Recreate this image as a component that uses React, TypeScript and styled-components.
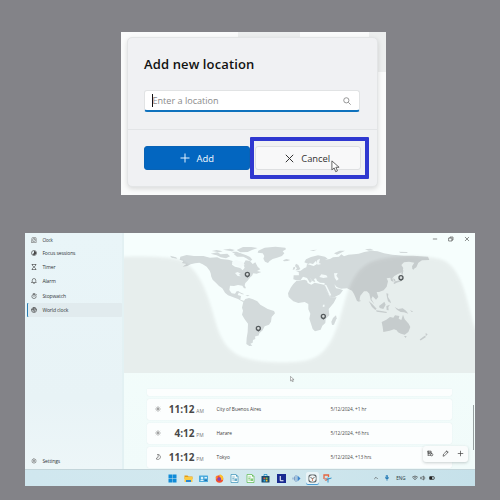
import React from "react";
import styled, { createGlobalStyle } from "styled-components";

const Global = createGlobalStyle`
  * { box-sizing: border-box; }
  body { margin: 0; background: #838388; overflow: hidden; }
`;

const Page = styled.main`
  width: 500px;
  height: 500px;
  padding: 32px 25px 14px;
  display: flex;
  flex-direction: column;
  justify-content: space-between;
  background: #838388;
  font-family: "Open Sans", "Noto Sans", sans-serif;
  color: #222;
`;

/* ---------- dialog ---------- */

const Backdrop = styled.section`
  width: 265px;
  height: 163px;
  margin-left: 96px;
  padding: 5px 8px 8px 6px;
  overflow: hidden;
  background:
    linear-gradient(#eceeee, #eceeee) 117px 0 / 62px 5px no-repeat,
    linear-gradient(#eceeee, #eceeee) 248px 0 / 17px 40px no-repeat,
    #fafbfb;
`;

const Dialog = styled.div`
  height: 150px;
  display: flex;
  flex-direction: column;
  border: 1px solid #e3e5e6;
  border-radius: 5px;
  background: #f0f1f3;
  box-shadow: 0 2px 5px rgba(0, 0, 0, 0.13);
`;

const DialogBody = styled.div`
  height: 92px;
  padding: 17px 17px 0 16px;
  border-bottom: 1px solid #e3e5e7;
`;

const Title = styled.h1`
  margin: 0;
  height: 20px;
  font-size: 13px;
  line-height: 19px;
  font-weight: 600;
  letter-spacing: 0.12px;
  white-space: nowrap;
  color: #111;
`;

const Field = styled.div`
  margin-top: 15px;
  height: 22px;
  display: flex;
  align-items: center;
  padding: 0 8px 0 7px;
  border: 1px solid #e1e3e4;
  border-bottom: 2px solid #0f72bd;
  border-radius: 3px;
  background: #fff;
  font-size: 9.1px;
  color: #8a8a8a;
`;

const Caret = styled.i`
  width: 1px;
  height: 13px;
  margin-right: -0.6px;
  background: #111;
`;

const Placeholder = styled.span`
  flex: 1;
  line-height: 14px;
`;

const DialogFooter = styled.div`
  flex: 1;
  display: flex;
  gap: 6px;
  padding: 16px 16px 0;
`;

const Button = styled.button<{ $primary?: boolean }>`
  width: 105.5px;
  height: 24px;
  padding: 0;
  display: flex;
  align-items: center;
  justify-content: center;
  gap: 7px;
  border: 1px solid ${(p) => (p.$primary ? "#0963b5" : "#dedfe1")};
  border-radius: 3px;
  background: ${(p) => (p.$primary ? "#0366c0" : "#f8f8f9")};
  color: ${(p) => (p.$primary ? "#f4faff" : "#333")};
  font: 9.4px "Open Sans", "Noto Sans", sans-serif;
`;

const CancelSlot = styled.div`
  position: relative;
  margin-left: -0.5px;
`;

const Highlight = styled.div`
  position: absolute;
  left: -5px;
  top: -9px;
  width: 119px;
  height: 42px;
  border: 4px solid #2f38d0;
  border-radius: 1px;
`;

const Pointer = styled.svg<{ $x: number; $y: number; $w: number }>`
  position: absolute;
  left: ${(p) => p.$x}px;
  top: ${(p) => p.$y}px;
  width: ${(p) => p.$w}px;
`;

/* ---------- clock window ---------- */

const Desktop = styled.section`
  width: 450px;
  height: 253px;
  display: flex;
  flex-direction: column;
  overflow: hidden;
`;

const Window = styled.div`
  height: 236px;
  display: flex;
`;

const Sidebar = styled.nav`
  width: 99px;
  padding: 0 2px 1px;
  display: flex;
  flex-direction: column;
  background: linear-gradient(90deg, transparent 97px, #e3f1f3 97px), linear-gradient(#e9f5f8, #e8f3f6 70%, #edf6f8);
`;

const NavItem = styled.div<{ $active?: boolean; $small?: boolean; $bottom?: boolean }>`
  height: ${(p) => (p.$small ? "13.2px" : "14.1px")};
  margin-top: ${(p) => (p.$bottom ? "auto" : "0")};
  display: flex;
  align-items: center;
  gap: 5.4px;
  padding-left: 4px;
  border-radius: 1px;
  background: ${(p) => (p.$active ? "#e1ebee" : "transparent")};
  box-shadow: ${(p) => (p.$active ? "inset 1px 0 #2b7fb5" : "none")};
  font-size: ${(p) => (p.$small ? "4.4px" : "5px")};
  letter-spacing: -0.1px;
  color: #30373a;
  white-space: nowrap;
  svg { width: 6px; height: 6px; }
`;

const Content = styled.div`
  position: relative;
  flex: 1;
  min-width: 0;
  display: flex;
  flex-direction: column;
  background: linear-gradient(#f4fefc, #f1fbfa);
`;

const MapCanvas = styled.svg`
  display: block;
  width: 351px;
  height: 140.4px;
  flex: none;
`;

const WindowControls = styled.div`
  position: absolute;
  top: 2.5px;
  right: 5px;
  display: flex;
  gap: 10px;
  svg { width: 6px; height: 6px; }
`;

const List = styled.div`
  margin: 15.2px 0 0 23px;
  width: 305px;
  display: flex;
  flex-direction: column;
  gap: 3px;
`;

const Row = styled.div<{ $cut?: boolean }>`
  height: ${(p) => (p.$cut ? "7px" : "21px")};
  flex: none;
  display: flex;
  align-items: center;
  background: #fcfefe;
  border-radius: ${(p) => (p.$cut ? "0 0 2px 2px" : "2px")};
  box-shadow: 0 0 1px #d5e2e4;
  white-space: nowrap;
  color: #4c4c4c;
  font-size: 4.8px;
  svg { width: 6px; height: 6px; margin-left: 8px; }
`;

const Time = styled.span`
  width: 33.5px;
  text-align: right;
  font-size: 10px;
  font-weight: 700;
  color: #484848;
`;

const Meridiem = styled.span`
  width: 22px;
  padding: 4px 0 0 1.8px;
  font-size: 4.9px;
  color: #777;
`;

const City = styled.span`
  width: 114px;
  color: #3c3c3c;
`;

const DateNote = styled.span`
  letter-spacing: -0.06px;
`;

const Commands = styled.div`
  position: absolute;
  right: 7px;
  bottom: 7.5px;
  width: 45px;
  height: 15.5px;
  display: flex;
  align-items: center;
  justify-content: space-around;
  border-radius: 3px;
  background: #fafcfc;
  box-shadow: 0 1px 3px rgba(40, 60, 60, 0.24);
  svg { width: 7px; height: 7px; }
`;

const ScrollThumb = styled.i`
  position: absolute;
  right: 1px;
  top: 172px;
  width: 1px;
  height: 45px;
  background: #97a0a1;
`;

const Taskbar = styled.div`
  height: 17px;
  display: flex;
  align-items: center;
  border-top: 1px solid #c3d5da;
  background: linear-gradient(90deg, #d0e7ef, #d2e8ee 45%, #c6e1ea);
`;

const Apps = styled.div`
  display: flex;
  gap: 2.5px;
  margin-left: 141.2px;
`;

const AppTile = styled.div<{ $active?: boolean }>`
  width: 13px;
  height: 13px;
  display: grid;
  place-items: center;
  border-radius: 2px;
  background: ${(p) => (p.$active ? "#e9f4f7" : "transparent")};
  box-shadow: ${(p) => (p.$active ? "inset 0 -1px #4c9cd3" : "none")};
  svg { width: 9px; height: 9px; display: block; }
`;

const Tray = styled.div`
  margin-left: 39px;
  display: flex;
  align-items: center;
  font-size: 4.6px;
  color: #26363c;
  svg { width: 6px; height: 6px; }
`;

const Gap = styled.span<{ $w: number }>`
  width: ${(p) => p.$w}px;
`;

const Line = ({ d, w = 1.2, color = "#444", fill = "none" }: { d: string; w?: number; color?: string; fill?: string }) => (
  <svg viewBox="0 0 12 12" fill={fill} stroke={color} strokeWidth={w} strokeLinecap="round" strokeLinejoin="round">
    <path d={d} />
  </svg>
);

const Arrow = ({ x, y, w }: { x: number; y: number; w: number }) => (
  <Pointer $x={x} $y={y} $w={w} viewBox="0 0 10 14">
    <path d="M1 1v10l2.5-2.2L5.2 13l2-.9-1.8-4H9z" fill="#fff" stroke="#555" strokeWidth="1" />
  </Pointer>
);

const LAND = [
  "M181 86L200 81 222 84 250 84 270 89 292 88 303 93 325 95 338 99 336 110 345 116 361 120 368 127 374 119 370 109 377 97 390 99 398 108 406 103 413 116 421 124 411 129 424 132 410 137 400 136 396 143 391 148 382 159 376 165 374 172 378 181 372 181 367 173 354 171 342 174 330 173 328 186 335 196 345 197 350 190 358 190 353 201 363 204 361 215 373 219 378 222 368 221 354 213 340 208 324 202 315 194 307 181 297 174 286 163 278 155 274 146 272 136 269 128 260 116 248 109 238 104 225 106 212 109 202 114 188 116 199 108 186 105 190 99 179 95Z",
  "M272 77L292 73 302 79 322 77 330 85 318 91 302 88 290 82ZM275 69L290 66 308 70 297 73ZM309 65L330 62 345 66 335 70ZM341 78L360 75 379 82 390 87 397 95 391 99 379 91 370 86 351 86ZM350 66L369 57 394 57 413 60 396 66 383 72 361 73ZM334 71L350 71 361 76 347 79Z",
  "M415 68L434 59 466 56 496 59 498 64 488 70 493 76 486 84 471 89 458 93 449 99 444 105 435 101 430 92 433 84 428 76 413 74Z",
  "M370 221L376 213 387 210 399 214 412 220 421 230 433 237 443 243 462 249 465 256 455 267 453 281 447 290 434 295 428 307 418 316 416 322 405 325 406 333 399 336 398 344 391 347 397 353 388 354 379 348 380 330 383 312 384 287 374 274 366 260 369 248 366 239Z",
  "M489 97L499 93 511 96 503 99 492 100ZM528 107L535 111 541 123 535 127 526 127 531 121 525 114ZM520 118L526 116 524 124 518 126Z",
  "M521 142L537 142 536 132 528 130 542 128 552 121 559 118 561 108 571 111 581 114 591 108 588 98 579 108 570 106 565 108 553 103 558 94 573 87 594 82 615 86 623 92 614 95 630 93 639 88 657 86 664 79 672 85 685 80 702 79 716 77 733 72 754 68 773 70 792 76 817 80 852 83 880 83 924 86 928 96 906 97 895 104 889 118 880 124 876 115 883 104 867 101 852 103 844 111 850 120 846 133 834 138 823 144 817 151 821 162 813 158 811 149 800 151 804 160 800 176 791 187 777 192 770 192 775 207 768 215 758 205 754 213 763 229 752 216 748 197 741 190 732 190 721 203 717 221 711 219 702 198 696 188 681 181 663 182 650 177 643 169 648 181 658 182 669 187 660 199 644 207 633 209 622 194 612 177 614 165 600 164 591 158 588 151 582 153 586 162 578 160 568 148 576 159 570 165 561 150 549 146 542 156 529 157 520 154Z",
  "M529 159L554 155 561 158 563 165 574 170 584 164 612 170 620 190 631 208 650 208 641 225 626 243 628 262 617 273 616 285 607 293 602 305 585 310 578 303 573 287 568 272 571 257 565 244 565 228 554 222 535 225 520 220 506 207 504 196 512 179 520 168Z",
  "M648 262L650 271 642 290 636 291 634 281 639 270Z",
  "M785 282L799 275 810 267 820 269 825 262 838 264 836 272 844 276 849 260 854 274 866 287 871 297 865 312 854 320 843 317 834 313 830 307 822 304 809 308 790 312 788 297ZM852 324L860 324 857 330Z",
  "M746 219L756 227 770 242 766 246 756 237ZM768 247L785 249 801 252 799 255 770 251ZM777 234L788 226 793 221 797 230 790 243 779 240ZM799 234L810 230 805 237 806 247 800 246ZM824 237L835 243 848 241 858 248 865 257 852 253 842 252 831 245ZM799 196L805 197 804 207 811 218 813 226 804 220 801 208ZM870 246L880 251 875 252Z",
  "M917 315L923 319 917 325ZM914 323L918 327 902 337 899 334ZM820 165L827 160 842 156 847 146 850 149 844 160 830 164 823 168ZM847 119L850 128 848 140 844 139ZM879 113L884 118 880 126 876 121ZM819 151L825 154 827 161 822 160Z",
  "M348 190L360 193 373 199 366 199ZM376 201L389 202 383 205ZM150 83L168 88 172 92 155 89ZM717 213L722 218 719 222ZM735 64L751 62 762 67 746 68ZM836 71L860 72 864 75 842 75ZM642 76L659 68 675 68 651 80ZM569 67L591 65 580 69ZM303 172L312 184 307 180Z",
];

const WATER = [
  "M336 103L347 95 358 99 369 102 374 111 367 115 366 124 354 114 342 111Z",
  "M345 135L353 132 362 137 356 140 363 145 353 144Z",
  "M598 147L604 139 619 142 623 148 610 150ZM642 136L653 135 649 143 656 153 650 158 644 149ZM609 230L614 230 613 237 608 236Z",
  "M592 96L600 92 597 105 604 108 594 110 589 107Z",
  "M614 170L619 171 634 202 629 203Z",
];

const PINS = [
  [382, 139],
  [415, 301],
  [610, 265],
  [843, 149],
];

const WorldMap = () => (
  <MapCanvas viewBox="12 15 1053 421" preserveAspectRatio="none">
    <defs>
      <filter id="soft" x="-5%" y="-5%" width="110%" height="110%">
        <feGaussianBlur stdDeviation="4" />
      </filter>
      <filter id="coast">
        <feGaussianBlur stdDeviation="0.8" />
      </filter>
    </defs>
    <rect x="12" y="15" width="1053" height="421" fill="#f6fefd" />
    <g filter="url(#coast)">
      {LAND.map((d) => <path key={d} d={d} fill="#d3dadb" />)}
      {WATER.map((d) => <path key={d} d={d} fill="#f3fafa" />)}
    </g>
    <path
      filter="url(#soft)"
      fill="#0c0004"
      opacity="0.06"
      d="M-30 88C50 84 130 84 172 94C234 112 262 190 286 280C306 350 334 384 400 396C440 404 510 406 555 398C620 386 641 330 660 270C680 205 690 140 742 108C790 82 900 78 960 93C1015 108 1036 190 1050 250C1060 290 1064 310 1100 330V480H-30Z"
    />
    {PINS.map(([x, y]) => (
      <g key={x}>
        <path d={`M${x - 6} ${y + 4}L${x} ${y + 10}L${x + 6} ${y + 4}Z`} fill="#555b5d" />
        <circle cx={x} cy={y} r="6" fill="#d9dddd" stroke="#555b5d" strokeWidth="4" />
      </g>
    ))}
  </MapCanvas>
);

const Sun = () => <Line color="#777" w={0.9} fill="#bbb" d="M6 3.5a2.5 2.5 0 100 5a2.5 2.5 0 100-5M6 .8v.7M6 10.5v.7M.8 6h.7M10.5 6h.7M2.3 2.3l.5.5M9.2 9.2l.5.5M9.7 2.3l-.5.5M2.8 9.2l-.5.5" />;
const Moon = () => <Line color="#555" w={1.3} d="M6 1c5 0 6.5 6 3 8.7c-2 1.8-5.5 1.6-7-.7c4-.5 5.5-4 4-8z" />;

const NAV: { label: string; icon: React.ReactNode; active?: boolean }[] = [
  { label: "Focus sessions", icon: <svg viewBox="0 0 12 12"><circle cx="6" cy="6" r="5" fill="none" stroke="#444" strokeWidth="1.3" /><path d="M6 6V2a4 4 0 11-3 6.5z" fill="#444" /></svg> },
  { label: "Timer", icon: <Line d="M2 1h8M2 11h8M3 1v2.5L6 6 3 8.5V11M9 1v2.5L6 6l3 2.5V11" /> },
  { label: "Alarm", icon: <Line d="M1.5 9h9L9.5 7V4.5a3.5 3.5 0 00-7 0V7zM4.5 10.5q1.5 1.5 3 0" /> },
  { label: "Stopwatch", icon: <Line d="M6 2.5a4.3 4.3 0 100 8.6a4.3 4.3 0 100-8.6M6 4.5V7M4.5.8h3M10 2.3l.8.8" /> },
  { label: "World clock", active: true, icon: <Line w={1.3} d="M6 1a5 5 0 100 10A5 5 0 106 1M1.5 5l3-.5 1-3M5 5l3 1-1 3-2-1zM8 1.8L7.5 4l3 1" /> },
];

const CITIES = [
  { time: "11:12", half: "AM", city: "City of Buenos Aires", date: "5/12/2024, +1 hr", night: false },
  { time: "4:12", half: "PM", city: "Harare", date: "5/12/2024, +6 hrs", night: false },
  { time: "11:12", half: "PM", city: "Tokyo", date: "5/12/2024, +13 hrs", night: true },
];

const Doc = ({ color }: { color: string }) => (
  <svg viewBox="0 0 18 18">
    <path d="M2 1h10l4 4v12H2z" fill="#f5fbfa" stroke={color} strokeWidth="1.4" />
    <path d="M12 1v4h4z" fill={color} />
    <path d="M4.5 6h5M4.5 9h4M4.5 12h4" stroke={color} strokeWidth="1.2" />
    <rect x="9" y="9" width="5" height="5" fill={color} opacity=".75" />
  </svg>
);

const APPS: React.ReactNode[] = [
  <svg viewBox="0 0 18 18"><path d="M1 1h7.6v7.6H1zM9.4 1H17v7.6H9.4zM1 9.4h7.6V17H1zM9.4 9.4H17V17H9.4z" fill="#0f8bd8" /></svg>,
  <svg viewBox="0 0 18 18"><path d="M1 3h6l2 2h8v5H1z" fill="#e49b13" /><path d="M1 6h16v10H1z" fill="#fbcb45" /><path d="M4 12h10v4H4z" fill="#2986cf" /></svg>,
  <svg viewBox="0 0 18 18"><rect y="3" width="18" height="13" rx="1" fill="#49a9dc" /><circle cx="6" cy="8" r="2.5" fill="#d9f2fa" /><path d="M2 14q4-6 8 0zM11 6h5v3h-5z" fill="#d9f2fa" /><path d="M11 11h5v3h-5z" fill="#1e6fae" /></svg>,
  <svg viewBox="0 0 18 18"><circle cx="9" cy="10" r="7.5" fill="#f4502e" /><path d="M9 1c5 0 9 5 7 10-2 3-4 1-4-2-1-3-4-3-3-8z" fill="#ffc02e" /><path d="M1 6l3-3 2 3-3 5z" fill="#ff852b" /><circle cx="8.5" cy="10" r="3.7" fill="#8742bb" /></svg>,
  <Doc color="#3a91b8" />,
  <Doc color="#58b747" />,
  <svg viewBox="0 0 18 18"><path d="M6 4V1h6v3" fill="none" stroke="#188fc8" strokeWidth="1.5" /><rect x="1" y="4" width="16" height="13" rx="1" fill="#174a70" /><path d="M5 7h3.5v3.5H5z" fill="#ef5738" /><path d="M9.5 7H13v3.5H9.5z" fill="#8bc13e" /><path d="M5 11.5h3.5V15H5z" fill="#2caee7" /><path d="M9.5 11.5H13V15H9.5z" fill="#fac12b" /></svg>,
  <svg viewBox="0 0 18 18"><rect width="18" height="18" fill="#182a91" /><path d="M6.5 4v9.5H13" fill="none" stroke="#fff" strokeWidth="2" /></svg>,
  <svg viewBox="0 0 18 18"><path d="M2 7v4M5 5v8M8 2v14" stroke="#7c9fc8" strokeWidth="2" /><path d="M11 3l6 6-6 6z" fill="#3e83cc" /></svg>,
  <svg viewBox="0 0 18 18"><rect x="1" y="1" width="16" height="16" rx="4" fill="#5b6265" /><circle cx="9" cy="9" r="6.6" fill="#f1f5f6" /><path d="M9 10L5 6M9 10l4-4" stroke="#444" strokeWidth="1.6" /><path d="M9 9v5" stroke="#d86b45" strokeWidth="1.6" /></svg>,
  <svg viewBox="0 0 18 18"><path d="M2 10V2h9v4" fill="none" stroke="#e5643f" strokeWidth="2.6" /><path d="M17 8L7 11M10 17V7" stroke="#2e91c9" strokeWidth="2" /><circle cx="6" cy="11" r="2" fill="none" stroke="#cf5740" strokeWidth="1.5" /></svg>,
];

export default function App() {
  return (
    <>
      <Global />
      <Page>
        <Backdrop>
          <Dialog>
            <DialogBody>
              <Title>Add new location</Title>
              <Field>
                <Caret />
                <Placeholder>Enter a location</Placeholder>
                <svg width="8" height="8" viewBox="0 0 12 12" fill="none" stroke="#888" strokeWidth="1.3"><circle cx="5" cy="5" r="3.9" /><path d="M8 8l3.5 3.5" /></svg>
              </Field>
            </DialogBody>
            <DialogFooter>
              <Button $primary>
                <svg width="10" height="10" viewBox="0 0 10 10" stroke="#e8f4ff"><path d="M5 .5v9M.5 5h9" /></svg>
                Add
              </Button>
              <CancelSlot>
                <Button>
                  <svg width="9" height="9" viewBox="0 0 9 9" stroke="#333"><path d="M.8.8l7.4 7.4M8.2.8L.8 8.2" /></svg>
                  Cancel
                </Button>
                <Highlight />
                <Arrow x={76} y={14} w={9} />
              </CancelSlot>
            </DialogFooter>
          </Dialog>
        </Backdrop>

        <Desktop>
          <Window>
            <Sidebar>
              <NavItem $small>
                <Line color="#777" d="M1.5 3q0-2 2-2h5q2 0 2 2v8h-9zM6 3a3 3 0 100 6a3 3 0 100-6M6 6l2-2M2 11l2-2" />
                Clock
              </NavItem>
              {NAV.map((n) => (
                <NavItem key={n.label} $active={n.active}>{n.icon}{n.label}</NavItem>
              ))}
              <NavItem $bottom>
                <Line color="#666" d="M6 1.5l1 .2.7 1.3 1.5-.1.8 1.6-.8 1.5.8 1.5-.8 1.6-1.5-.1-.7 1.3H5l-.7-1.3-1.5.1L2 7.5 2.8 6 2 4.5l.8-1.6 1.5.1L5 1.7zM6 4.5a1.5 1.5 0 100 3a1.5 1.5 0 100-3" />
                Settings
              </NavItem>
            </Sidebar>
            <Content>
              <WorldMap />
              <WindowControls>
                <Line d="M2.5 6h7" />
                <Line d="M2 4h6v6H2zM4 4V2h6v6H8" />
                <Line d="M2.5 2.5l7 7M9.5 2.5l-7 7" />
              </WindowControls>
              <Arrow x={166.3} y={143} w={4.5} />
              <List>
                <Row $cut />
                {CITIES.map((c) => (
                  <Row key={c.city}>
                    {c.night ? <Moon /> : <Sun />}
                    <Time>{c.time}</Time>
                    <Meridiem>{c.half}</Meridiem>
                    <City>{c.city}</City>
                    <DateNote>{c.date}</DateNote>
                  </Row>
                ))}
              </List>
              <Commands>
                <Line d="M2 2h5v2H2zM2 6h3M2 9h4M2 2v7M8 6a2 2 0 100 4a2 2 0 100-4M7 4v2" />
                <Line d="M2 10l.7-3L8.5 1.3l2.2 2.2L5 9.3zM7.5 2.5l2 2" />
                <Line d="M6 2v8M2 6h8" />
              </Commands>
              <ScrollThumb />
            </Content>
          </Window>
          <Taskbar>
            <Apps>
              {APPS.map((a, i) => <AppTile key={i} $active={i === 9}>{a}</AppTile>)}
            </Apps>
            <Tray>
              <Line d="M3 7.5l3-3 3 3" />
              <Gap $w={5} />
              <Line color="#2379b5" fill="#2379b5" d="M5 1h2v5H5zM3 5q0 3 3 3t3-3M6 8v3" />
              <Gap $w={6} />
              ENG
              <Gap $w={6} />
              <Line w={1.5} d="M1 4q5-4.5 10 0M3 6.5q3-3 6 0M5.5 9h1" />
              <Gap $w={2} />
              <Line d="M2 4.5h2l3-2.5v8L4 7.5H2zM9 3.5q2 2.5 0 5" />
              <Gap $w={3} />
              <svg viewBox="0 0 12 12"><rect x="1" y="3" width="9" height="6" rx="1" fill="none" stroke="#222" strokeWidth="1.3" /><path d="M2 4h4v4H2zM11 5v2" fill="#222" stroke="#222" /></svg>
            </Tray>
          </Taskbar>
        </Desktop>
      </Page>
    </>
  );
}
